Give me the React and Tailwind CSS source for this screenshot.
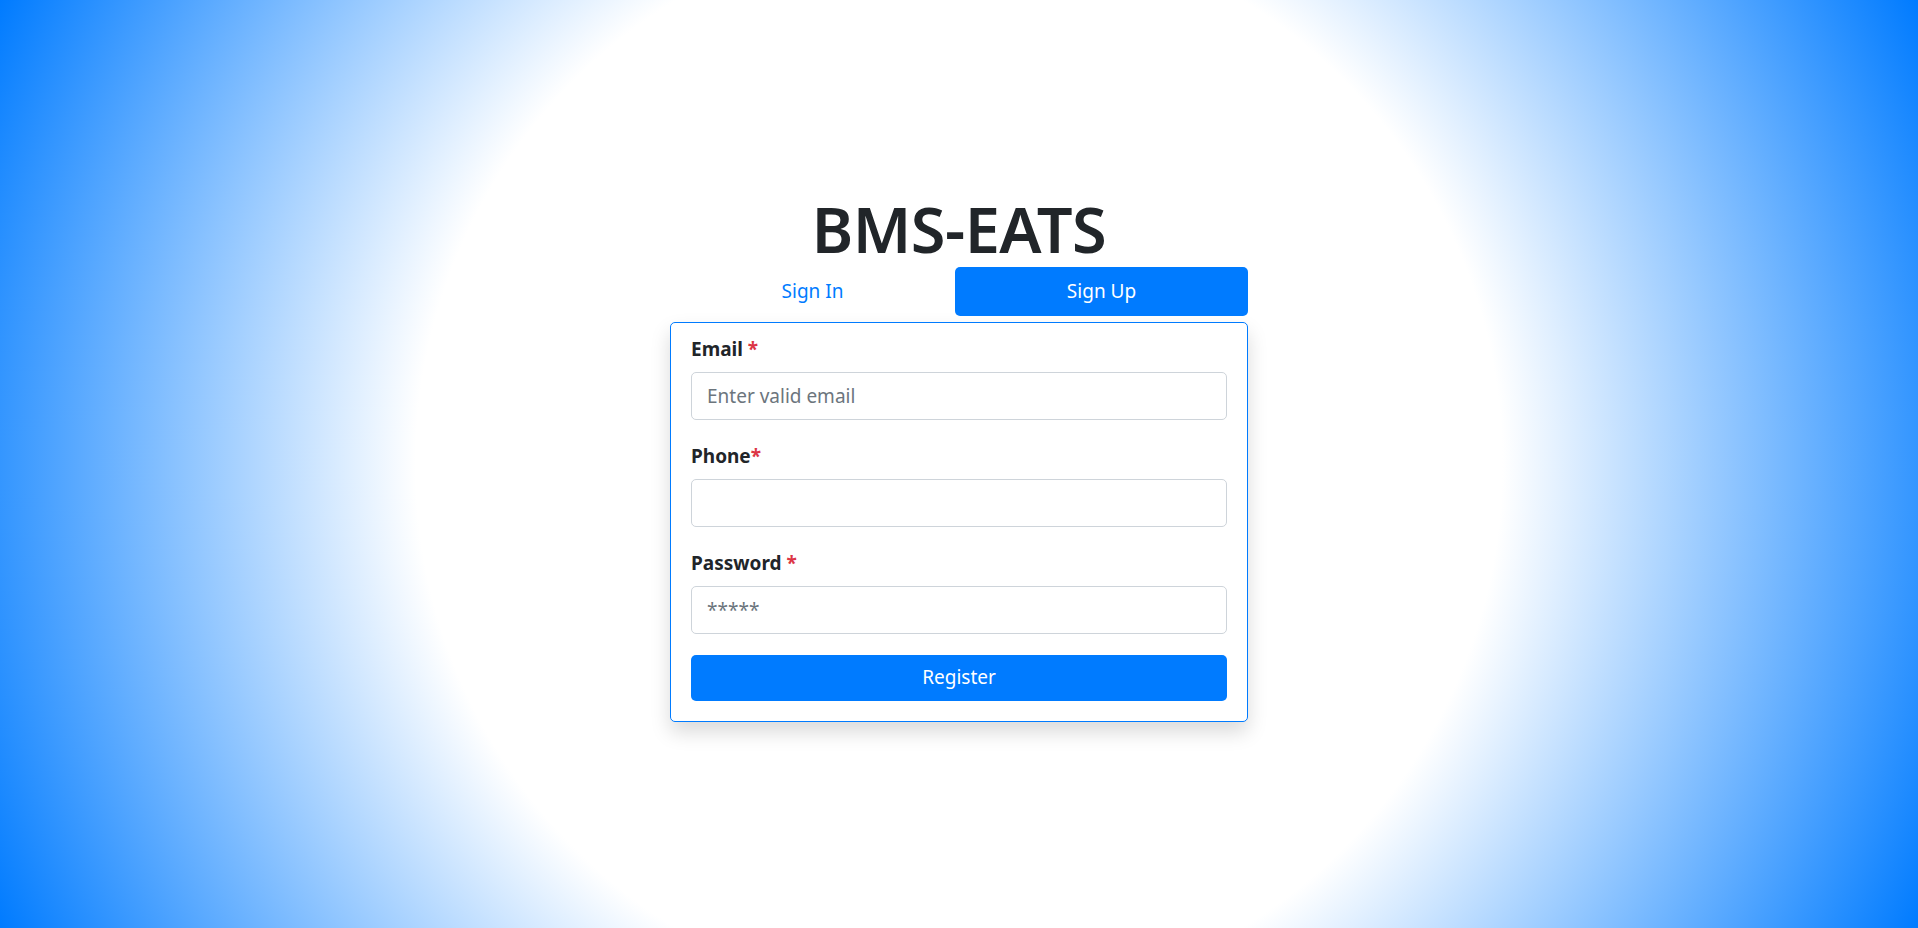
import { useState } from 'react';

const FIELDS = [
  { id: 'email',    label: 'Email',    gap: true,  type: 'email',    placeholder: 'Enter valid email' },
  { id: 'phone',    label: 'Phone',    gap: false, type: 'tel',      placeholder: '' },
  { id: 'password', label: 'Password', gap: true,  type: 'password', placeholder: '*****' },
];

export default function App() {
  const [tab, setTab] = useState('signup');

  return (
    <div className="min-h-screen flex flex-col items-center justify-center pb-[16px] bg-[radial-gradient(circle,#ffffff_51%,#007bff)] font-['Noto_Sans','Open_Sans',sans-serif] text-[#212529]">
      <div className="w-[578px]">
        <h1 className="text-center text-[63px] font-semibold leading-[76px] tracking-[-0.5px]">BMS-EATS</h1>

        {/* Tabs */}
        <div className="flex">
          <button onClick={() => setTab('signin')}
            className={`flex-1 h-[49px] rounded-[5px] text-[19px] ${tab === 'signin' ? 'bg-[#007bff] text-white' : 'text-[#007bff]'}`}>
            Sign In
          </button>
          <button onClick={() => setTab('signup')}
            className={`w-[293px] h-[49px] rounded-[5px] text-[19px] ${tab === 'signup' ? 'bg-[#007bff] text-white' : 'text-[#007bff]'}`}>
            Sign Up
          </button>
        </div>

        {/* Form card */}
        <form onSubmit={e => e.preventDefault()}
          className="mt-[6px] bg-white border border-[#007bff] rounded-[5px] px-[20px] pt-[11px] pb-[20px] shadow-[0_10px_20px_rgba(0,0,0,0.15)]">
          {FIELDS.map(f => (
            <div key={f.id} className="mb-[21px]">
              <label htmlFor={f.id} className="block h-[30px] leading-[30px] mb-[8px] text-[19px] font-bold">
                {f.label}{f.gap ? ' ' : ''}<span className="text-[#dc3545]">*</span>
              </label>
              <input id={f.id} type={f.type} placeholder={f.placeholder}
                className="block w-full h-[48px] px-[15px] text-[19px] text-[#495057] border border-[#ced4da] rounded-[5px] bg-white outline-none placeholder:text-[#6c757d]" />
            </div>
          ))}
          <button type="submit"
            className="block w-full h-[46px] rounded-[5px] bg-[#007bff] text-white text-[19px]">
            Register
          </button>
        </form>
      </div>
    </div>
  );
}
